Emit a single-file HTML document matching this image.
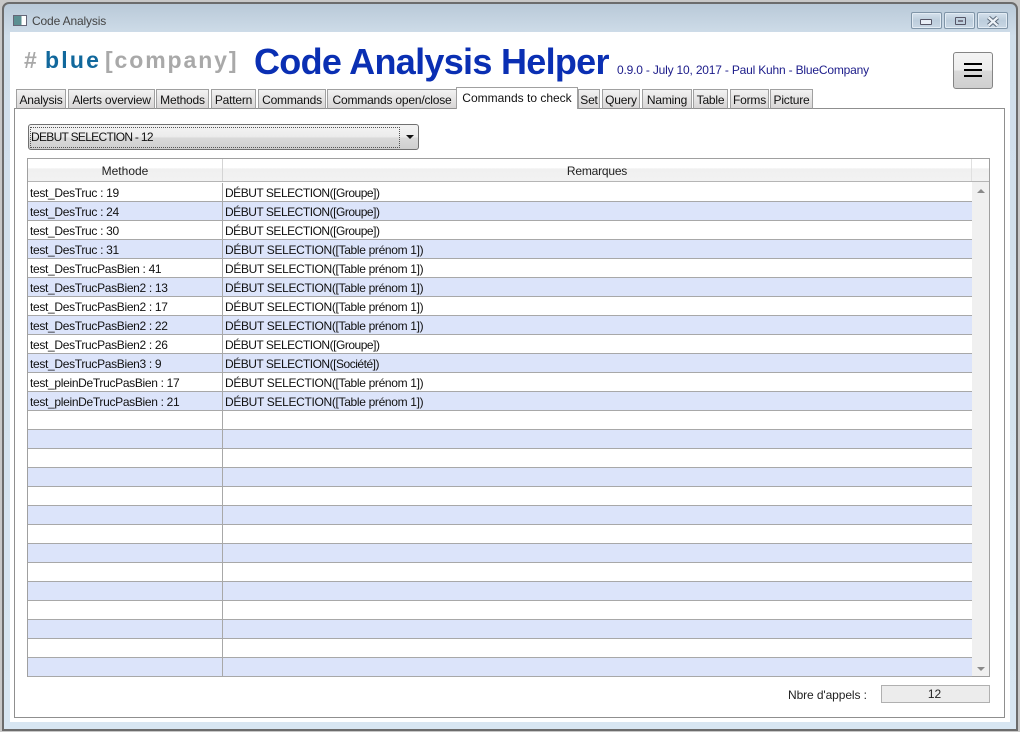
<!DOCTYPE html>
<html><head><meta charset="utf-8"><style>
html,body{margin:0;padding:0}
body{width:1020px;height:732px;position:relative;overflow:hidden;background:#c8c8c8;font-family:"Liberation Sans",sans-serif;font-size:12px;color:#111}
div,span{position:absolute;box-sizing:border-box;white-space:nowrap}
.frame{left:2px;top:2px;width:1016px;height:729px;border:2px solid #6c6c6c;border-radius:7px 7px 0 0;background:linear-gradient(#b9c9d8 0,#d0deea 32px,#d8e6f2 100%)}
.client{left:10px;top:32px;width:1000px;height:690px;background:#fff}
.panel{left:14px;top:108px;width:991px;height:610px;border:1px solid #8f8f8f;background:#fff}
.tb{top:89px;height:20px;border:1px solid #a0a0a0;border-bottom:1px solid #8f8f8f;background:linear-gradient(#f2f2f2,#d8d6d6);text-align:center;line-height:20px;font-size:12px;letter-spacing:-.2px}
.act{top:87px;height:22px;background:#fff;border-bottom:0;line-height:21px;z-index:3;letter-spacing:0}
.wb{top:12px;height:17px;border:1px solid #8095a8;border-radius:2px;background:linear-gradient(#d5e1ec,#bccddc 50%,#c9d7e4);box-shadow:inset 0 0 0 1px #e3ecf4}
.r{left:28px;width:944px;height:19px;border-bottom:1px solid #a8a8a8;line-height:20px}
.r:nth-child(even){background:#dce4fa}
.r i{position:absolute;left:194px;top:0;width:1px;height:19px;background:#a8a8a8}
.r b{position:absolute;left:2px;font-weight:normal;letter-spacing:-.32px}
.r u{position:absolute;left:197px;text-decoration:none;letter-spacing:-.33px}
.r u.g{letter-spacing:-.48px}
.l{font:bold 23px/30px 'Liberation Sans',sans-serif}
</style></head><body>
<div class="frame"></div>
<span style="left:13px;top:15px;width:14px;height:11px;border:1px solid #667;background:linear-gradient(90deg,#5b8f92 62%,#fff 62%)"></span>
<span style="left:32px;top:14px;font-size:12px;color:#444;letter-spacing:-.15px">Code Analysis</span>
<div class="wb" style="left:911px;width:31px"><span style="left:8px;top:6px;width:12px;height:6px;border:1px solid #556;border-radius:1px;background:#e8eef6"></span></div>
<div class="wb" style="left:944px;width:31px"><span style="left:10px;top:4px;width:11px;height:8px;border:1px solid #556;border-radius:1px"></span><span style="left:13px;top:7px;width:5px;height:2px;background:#778"></span></div>
<div class="wb" style="left:977px;width:31px"><svg style="position:absolute;left:8px;top:3px" width="14" height="11" viewBox="0 0 14 11"><path d="M2.5 1.5 L11.5 9.5 M11.5 1.5 L2.5 9.5" stroke="#5a6878" stroke-width="4.2" fill="none"/><path d="M2.5 1.5 L11.5 9.5 M11.5 1.5 L2.5 9.5" stroke="#eef3f8" stroke-width="2.2" fill="none"/></svg></div>
<div class="client"></div>

<span class="l" style="left:24px;top:45px;color:#a8a8a8">#</span>
<span class="l" style="left:45px;top:45px;color:#11689c;letter-spacing:2.2px">blue</span>
<span class="l" style="left:105px;top:45px;color:#a9a9a9;letter-spacing:1.9px">[company]</span>
<span style="left:254px;top:40px;font:bold 36px/44px 'Liberation Sans',sans-serif;color:#0a2fb3;letter-spacing:-.7px">Code Analysis Helper</span>
<span style="left:617px;top:63px;font-size:12px;color:#1c1c8a;letter-spacing:-.19px">0.9.0 - July 10, 2017 - Paul Kuhn - BlueCompany</span>
<div style="left:953px;top:52px;width:40px;height:37px;border:1px solid #858585;border-radius:3px;background:linear-gradient(#f4f4f4 0,#ededed 48%,#d9d9d9 52%,#cfcfcf 100%)"><span style="left:10px;top:10px;width:18px;height:14px;border-top:2px solid #000;border-bottom:2px solid #000"></span><span style="left:10px;top:16px;width:18px;height:2px;background:#000"></span></div>

<div class="panel"></div>
<div class="tb" style="left:16px;width:50px">Analysis</div>
<div class="tb" style="left:68px;width:87px">Alerts overview</div>
<div class="tb" style="left:156px;width:53px">Methods</div>
<div class="tb" style="left:211px;width:45px">Pattern</div>
<div class="tb" style="left:258px;width:68px">Commands</div>
<div class="tb" style="left:327px;width:130px">Commands open/close</div>
<div class="tb act" style="left:456px;width:122px">Commands to check</div>
<div class="tb" style="left:578px;width:22px">Set</div>
<div class="tb" style="left:602px;width:38px">Query</div>
<div class="tb" style="left:642px;width:50px">Naming</div>
<div class="tb" style="left:693px;width:35px">Table</div>
<div class="tb" style="left:730px;width:39px">Forms</div>
<div class="tb" style="left:770px;width:43px">Picture</div>

<div style="left:28px;top:124px;width:391px;height:26px;border:1px solid #707070;border-radius:3px;background:linear-gradient(#f3f3f3,#ececec 48%,#d9d9d9 55%,#cfcfcf)"></div>
<div style="left:30px;top:127px;width:370px;height:21px;border:1px dotted #555"></div>
<span style="left:31px;top:130px;font-size:12px;letter-spacing:-.7px">DEBUT SELECTION - 12</span>
<span style="left:406px;top:135px;width:0;height:0;border-left:4px solid transparent;border-right:4px solid transparent;border-top:4px solid #111"></span>

<div style="left:27px;top:158px;width:963px;height:519px;border:1px solid #a0a0a0;background:#fff"></div>
<div style="left:28px;top:159px;width:961px;height:23px;border-bottom:1px solid #b5b5b5;background:linear-gradient(#fff 0,#fff 40%,#f0f0f0 45%,#f2f2f2)"></div>
<span style="left:222px;top:159px;width:1px;height:22px;background:#d4d4d4"></span>
<span style="left:971px;top:159px;width:1px;height:22px;background:#e0e0e0"></span>
<span style="left:28px;top:164px;width:194px;text-align:center;color:#222">Methode</span>
<span style="left:223px;top:164px;width:748px;text-align:center;color:#222;letter-spacing:-.2px">Remarques</span>
<div style="left:972px;top:182px;width:17px;height:494px;background:#f0f0f0"></div>
<span style="left:977px;top:189px;width:0;height:0;border-left:4px solid transparent;border-right:4px solid transparent;border-bottom:4px solid #8a8a8a"></span>
<span style="left:977px;top:667px;width:0;height:0;border-left:4px solid transparent;border-right:4px solid transparent;border-top:4px solid #8a8a8a"></span>

<div style="left:0;top:183px;width:1020px;height:494px">
<div class="r" style="top:0"><b>test_DesTruc : 19</b><i></i><u class="g">DÉBUT SELECTION([Groupe])</u></div>
<div class="r" style="top:19px"><b>test_DesTruc : 24</b><i></i><u class="g">DÉBUT SELECTION([Groupe])</u></div>
<div class="r" style="top:38px"><b>test_DesTruc : 30</b><i></i><u class="g">DÉBUT SELECTION([Groupe])</u></div>
<div class="r" style="top:57px"><b>test_DesTruc : 31</b><i></i><u>DÉBUT SELECTION([Table prénom 1])</u></div>
<div class="r" style="top:76px"><b>test_DesTrucPasBien : 41</b><i></i><u>DÉBUT SELECTION([Table prénom 1])</u></div>
<div class="r" style="top:95px"><b>test_DesTrucPasBien2 : 13</b><i></i><u>DÉBUT SELECTION([Table prénom 1])</u></div>
<div class="r" style="top:114px"><b>test_DesTrucPasBien2 : 17</b><i></i><u>DÉBUT SELECTION([Table prénom 1])</u></div>
<div class="r" style="top:133px"><b>test_DesTrucPasBien2 : 22</b><i></i><u>DÉBUT SELECTION([Table prénom 1])</u></div>
<div class="r" style="top:152px"><b>test_DesTrucPasBien2 : 26</b><i></i><u class="g">DÉBUT SELECTION([Groupe])</u></div>
<div class="r" style="top:171px"><b>test_DesTrucPasBien3 : 9</b><i></i><u class="g">DÉBUT SELECTION([Société])</u></div>
<div class="r" style="top:190px"><b>test_pleinDeTrucPasBien : 17</b><i></i><u>DÉBUT SELECTION([Table prénom 1])</u></div>
<div class="r" style="top:209px"><b>test_pleinDeTrucPasBien : 21</b><i></i><u>DÉBUT SELECTION([Table prénom 1])</u></div>
<div class="r" style="top:228px"><i></i></div>
<div class="r" style="top:247px"><i></i></div>
<div class="r" style="top:266px"><i></i></div>
<div class="r" style="top:285px"><i></i></div>
<div class="r" style="top:304px"><i></i></div>
<div class="r" style="top:323px"><i></i></div>
<div class="r" style="top:342px"><i></i></div>
<div class="r" style="top:361px"><i></i></div>
<div class="r" style="top:380px"><i></i></div>
<div class="r" style="top:399px"><i></i></div>
<div class="r" style="top:418px"><i></i></div>
<div class="r" style="top:437px"><i></i></div>
<div class="r" style="top:456px"><i></i></div>
<div class="r" style="top:475px"><i></i></div>
</div>

<span style="left:788px;top:688px;font-size:12px;color:#222;letter-spacing:-.1px">Nbre d'appels :</span>
<div style="left:881px;top:685px;width:109px;height:18px;border:1px solid #b0b0b0;background:#ececec;text-align:center;line-height:16px;color:#222;padding-right:2px">12</div>
</body></html>
